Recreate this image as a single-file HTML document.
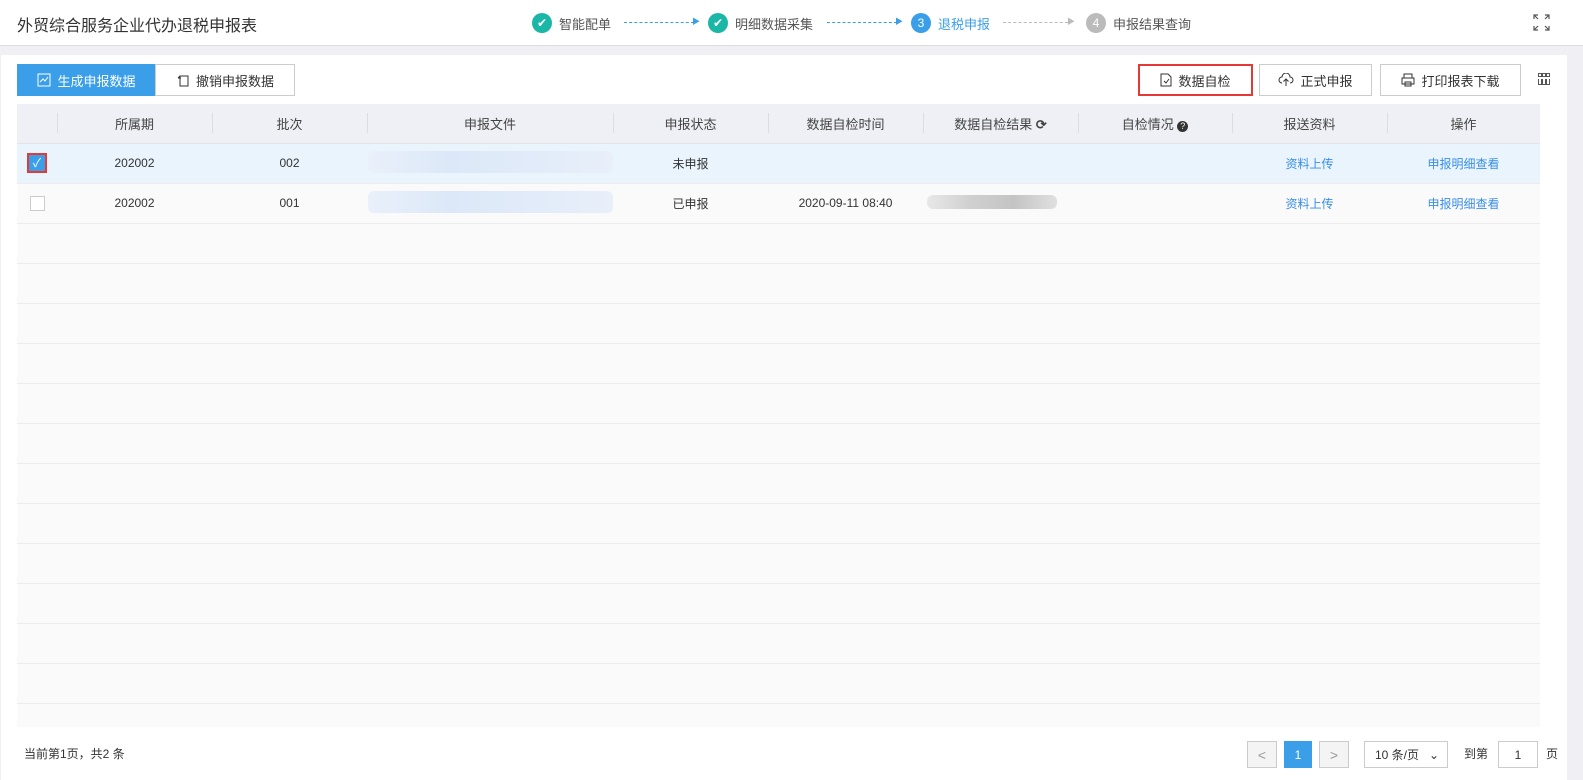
<!DOCTYPE html>
<html><head><meta charset="utf-8"><style>
*{box-sizing:border-box;margin:0;padding:0}
body{width:1583px;height:780px;background:#f0f0f4;font-family:"Liberation Sans","Noto Sans CJK SC",sans-serif;font-size:12px;color:#333;position:relative;overflow:hidden}
.hdr{position:absolute;left:0;top:0;width:1583px;height:46px;background:#fff;border-bottom:1px solid #ddd}
.title{position:absolute;left:17px;top:12px;font-size:16px;color:#333}
.step{position:absolute;top:13px;font-size:13px;color:#555;display:flex;align-items:center}
.dot{width:20px;height:20px;border-radius:50%;display:inline-flex;align-items:center;justify-content:center;color:#fff;font-size:12px;margin-right:7px}
.line{position:absolute;top:22px;border-top:1px dashed #3a9fe8;height:0}
.main{position:absolute;left:1px;top:55px;width:1566px;height:725px;background:#fff}
.btn{position:absolute;top:64px;height:32px;border:1px solid #ccc;background:#fff;font-size:13px;display:flex;align-items:center;justify-content:center;gap:6px;color:#333}
table{position:absolute;left:17px;top:104px;width:1523px;border-collapse:collapse;table-layout:fixed}
th{height:39px;background:#eff0f5;font-weight:normal;font-size:13px;color:#444;position:relative;border-bottom:1px solid #e3e3e8}
th+th:before{content:"";position:absolute;left:0;top:9px;height:20px;border-left:1px solid #dcdce2}
td{height:40px;text-align:center;border-bottom:1px solid #ececec;background:#fafafa;font-size:12px}
tr.sel td{background:#e9f4fd}
.lk{color:#3a8ee6}
.blur{display:inline-block;height:22px;border-radius:6px;background:linear-gradient(90deg,#e9f0fa,#dce8f8,#e1ebf9,#e8eff9)}
.pg{position:absolute;top:741px;height:27px;border:1px solid #ccc;background:#f4f4f4;display:flex;align-items:center;justify-content:center;color:#999;font-size:14px}
</style></head><body>
<div class="hdr">
<div class="title">外贸综合服务企业代办退税申报表</div>
<div class="step" style="left:532px"><span class="dot" style="background:#1bb7a6">✔</span>智能配单</div>
<div class="line" style="left:624px;width:70px"></div><span style="position:absolute;left:692px;top:16px;color:#3a9fe8;font-size:8px">▶</span>
<div class="step" style="left:708px"><span class="dot" style="background:#1bb7a6">✔</span>明细数据采集</div>
<div class="line" style="left:827px;width:70px"></div><span style="position:absolute;left:895px;top:16px;color:#3a9fe8;font-size:8px">▶</span>
<div class="step" style="left:911px;color:#3a9fe8"><span class="dot" style="background:#3a9fe8">3</span>退税申报</div>
<div class="line" style="left:1003px;width:65px;border-color:#bbb"></div><span style="position:absolute;left:1067px;top:16px;color:#bbb;font-size:8px">▶</span>
<div class="step" style="left:1086px"><span class="dot" style="background:#bbb">4</span>申报结果查询</div>
<svg style="position:absolute;left:1533px;top:14px" width="17" height="17" viewBox="0 0 17 17" fill="none" stroke="#555" stroke-width="1.2"><path d="M1 5V1h4M1 1l4 4M16 5V1h-4M16 1l-4 4M1 12v4h4M1 16l4-4M16 12v4h-4M16 16l-4-4"/></svg>
</div>
<div class="main"></div>
<div class="btn" style="left:17px;width:139px;background:#3a9fe8;border-color:#3a9fe8;color:#fff"><svg width="14" height="14" viewBox="0 0 14 14" fill="none" stroke="#fff"><rect x="1" y="1" width="12" height="12"/><path d="M3 9l3-3 2 2 3-4"/></svg>生成申报数据</div>
<div class="btn" style="left:155px;width:140px"><svg width="14" height="14" viewBox="0 0 14 14" fill="none" stroke="#333"><path d="M4 3h8v10H4zM4 3l-2 2M2 5h3"/></svg>撤销申报数据</div>
<div class="btn" style="left:1138px;width:115px;border:2px solid #e53935"><svg width="12" height="14" viewBox="0 0 12 14" fill="none" stroke="#333"><path d="M1 1h7l3 3v9H1z M4 8l2 2 3-4"/></svg>数据自检</div>
<div class="btn" style="left:1259px;width:113px"><svg width="16" height="14" viewBox="0 0 16 14" fill="none" stroke="#333"><path d="M4 10a3 3 0 010-6 4 4 0 018 0 3 3 0 010 6M8 13V6M5.5 8.5L8 6l2.5 2.5"/></svg>正式申报</div>
<div class="btn" style="left:1380px;width:141px"><svg width="14" height="14" viewBox="0 0 14 14" fill="none" stroke="#333"><path d="M3 5V1h8v4M1 5h12v6H1zM4 9h6v4H4z"/></svg>打印报表下载</div>
<svg style="position:absolute;left:1538px;top:73px" width="12" height="12" viewBox="0 0 12 12" fill="none" stroke="#555"><rect x="0.5" y="0.5" width="3" height="3"/><rect x="4.5" y="0.5" width="3" height="3"/><rect x="8.5" y="0.5" width="3" height="3"/><path d="M0.5 6v5.5h3V6M4.5 6v5.5h3V6M8.5 6v5.5h3V6"/></svg>
<table>
<colgroup><col style="width:40px"><col style="width:155px"><col style="width:155px"><col style="width:246px"><col style="width:155px"><col style="width:155px"><col style="width:155px"><col style="width:154px"><col style="width:155px"><col style="width:153px"></colgroup>
<tr><th></th><th>所属期</th><th>批次</th><th>申报文件</th><th>申报状态</th><th>数据自检时间</th><th>数据自检结果 <b>⟳</b></th><th>自检情况 <span style="display:inline-block;width:11px;height:11px;border-radius:50%;background:#333;color:#fff;font-size:9px;line-height:11px">?</span></th><th>报送资料</th><th>操作</th></tr>
<tr class="sel"><td><span style="display:inline-block;width:20px;height:20px;border:2px solid #e53935;background:#3a9fe8;color:#fff;font-size:12px;line-height:16px;vertical-align:middle">✓</span></td><td>202002</td><td>002</td><td><span class="blur" style="width:245px"></span></td><td>未申报</td><td></td><td></td><td></td><td class="lk">资料上传</td><td class="lk">申报明细查看</td></tr>
<tr><td><span style="display:inline-block;width:15px;height:15px;border:1px solid #ccc;background:#fff;vertical-align:middle"></span></td><td>202002</td><td>001</td><td><span class="blur" style="width:245px"></span></td><td>已申报</td><td>2020-09-11 08:40</td><td style="text-align:left"><span class="blur" style="width:130px;height:14px;margin-left:4px;background:linear-gradient(90deg,#e8e8e8,#d0d0d0,#c4c4c4,#e0e0e0)"></span></td><td></td><td class="lk">资料上传</td><td class="lk">申报明细查看</td></tr>
<tr><td colspan="10"></td></tr><tr><td colspan="10"></td></tr><tr><td colspan="10"></td></tr><tr><td colspan="10"></td></tr><tr><td colspan="10"></td></tr><tr><td colspan="10"></td></tr><tr><td colspan="10"></td></tr><tr><td colspan="10"></td></tr><tr><td colspan="10"></td></tr><tr><td colspan="10"></td></tr><tr><td colspan="10"></td></tr><tr><td colspan="10"></td></tr><tr><td colspan="10" style="height:24px;border:none"></td></tr>
</table>
<div style="position:absolute;left:24px;top:745px;font-size:12px">当前第1页，共2 条</div>
<div class="pg" style="left:1247px;width:30px">&lt;</div>
<div class="pg" style="left:1284px;width:28px;background:#3a9fe8;border-color:#3a9fe8;color:#fff;font-size:12px">1</div>
<div class="pg" style="left:1319px;width:30px">&gt;</div>
<div class="pg" style="left:1364px;width:84px;background:#fff;color:#333;font-size:12px;justify-content:space-between;padding:0 8px 0 10px"><span>10 条/页</span><span>⌄</span></div>
<div style="position:absolute;left:1464px;top:745px">到第</div>
<div class="pg" style="left:1498px;width:40px;background:#fff;color:#333;font-size:12px">1</div>
<div style="position:absolute;left:1546px;top:745px">页</div>
</body></html>
